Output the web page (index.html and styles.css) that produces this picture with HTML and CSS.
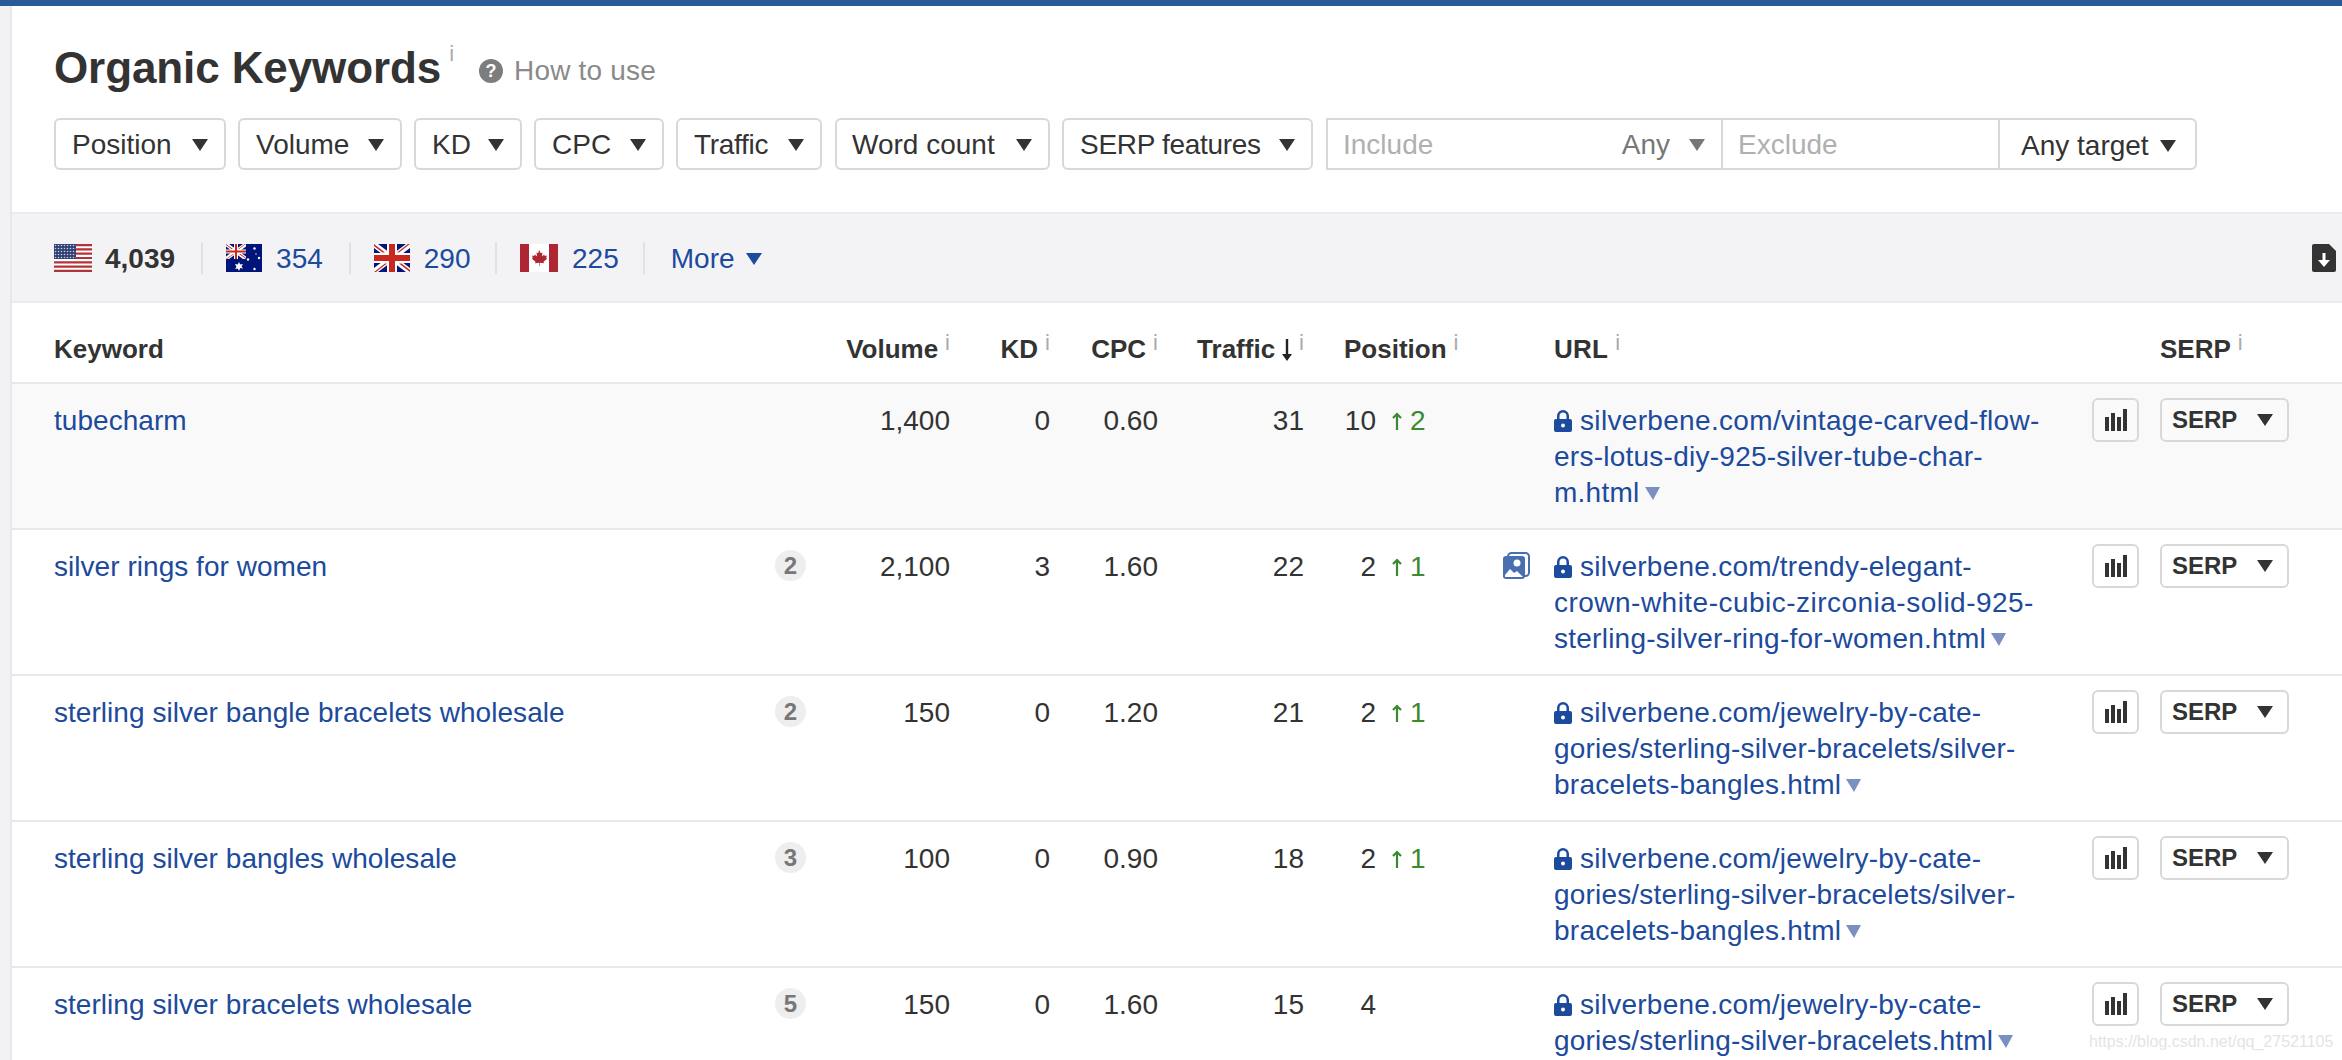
FILE: index.html
```html
<!DOCTYPE html>
<html lang="en">
<head>
<meta charset="utf-8">
<title>Organic Keywords</title>
<link rel="stylesheet" href="styles.css">
</head>
<body>
<svg class="defs" width="0" height="0" aria-hidden="true">
  <defs>
    <symbol id="lock" viewBox="0 0 18 22"><path fill="#1c4a9c" fill-rule="evenodd" d="M3 9V6a6 6 0 0 1 12 0v3h1a2 2 0 0 1 2 2v9a2 2 0 0 1-2 2H2a2 2 0 0 1-2-2v-9a2 2 0 0 1 2-2h1zm2.500 0h7V6a3.500 3.500 0 0 0-7 0v3zM9 13.500a2 2 0 1 0 0 4 2 2 0 0 0 0-4z"/></symbol>
    <symbol id="chart" viewBox="0 0 22 22"><path fill="#333" d="M0 8h4v14H0zM6 4h4v18H6zM12 8h4v14h-4zM18 0h4v22h-4z"/></symbol>
    <symbol id="up" viewBox="0 0 10 18"><path fill="none" stroke="#3a8a2f" stroke-width="2.200" d="M5 18V2M1 6l4-4 4 4"/></symbol>
  </defs>
</svg>
<div class="topbar"></div>
<div class="layout">
  <div class="strip"></div>
  <main class="main">
    <header class="head">
      <div class="title-row">
        <h1 class="title">Organic Keywords<span class="info info-title">i</span></h1>
        <a class="how">
          <svg class="how-icon" viewBox="0 0 24 24"><circle cx="12" cy="12" r="12" fill="#7d7d7d"/><text x="12" y="18" text-anchor="middle" class="how-q">?</text></svg>
          How to use
        </a>
      </div>
      <div class="filters">
        <button class="btn w-position">Position<i class="tri"></i></button>
        <button class="btn w-volume">Volume<i class="tri"></i></button>
        <button class="btn w-kd">KD<i class="tri"></i></button>
        <button class="btn w-cpc">CPC<i class="tri"></i></button>
        <button class="btn w-traffic">Traffic<i class="tri"></i></button>
        <button class="btn w-word">Word count<i class="tri"></i></button>
        <button class="btn w-features">SERP features<i class="tri"></i></button>
        <div class="search">
          <div class="s-include"><span class="ph">Include</span><span class="any">Any<i class="tri tri-gray"></i></span></div>
          <div class="s-exclude"><span class="ph">Exclude</span></div>
          <div class="s-target">Any target<i class="tri tri-close"></i></div>
        </div>
      </div>
    </header>

    <section class="band">
      <span class="country current">
        <svg class="flag flag-w" viewBox="0 0 38 28">
          <defs><pattern id="dots" width="3" height="3" patternUnits="userSpaceOnUse"><rect width="3" height="3" fill="#2f3f73"/><circle cx="1.500" cy="1.500" r=".8" fill="#c9cde0"/></pattern></defs>
          <rect width="38" height="28" fill="#fff"/>
          <path fill="#b0353a" d="M0 0h38v2.200H0zM0 4.300h38v2.200H0zM0 8.600h38v2.200H0zM0 12.900h38v2.200H0zM0 17.200h38v2.200H0zM0 21.500h38v2.200H0zM0 25.800h38V28H0z"/>
          <rect width="22" height="15" fill="url(#dots)"/>
        </svg>4,039</span>
      <span class="sep"></span>
      <a class="country">
        <svg class="flag" viewBox="0 0 36 28">
          <rect width="36" height="28" fill="#00157a"/>
          <path fill="#fff" d="M0 0h3l17 12.500V15h-3L0 2.500zM20 0v2.500L3 15H0v-2.500L17 0z"/>
          <path fill="#fff" d="M8 0h4v15H8zM0 5.500h20v4H0z"/>
          <path fill="#c8281e" d="M9 0h2v15H9zM0 6.500h20v2H0z"/>
          <path fill="#c8281e" d="M0 0l7 5H5.500L0 1zM20 15l-7-5h1.500l5.500 4zM20 0l-7 5h-1l7-5zM0 15l7-5h1l-7 5z"/>
          <path fill="#fff" d="M13 18l1.200 2.500 2.800-.6-1.500 2.300 1.500 2.300-2.800-.5L13 27l-1.200-2.500-2.800.5 1.500-2.300L9 19.900l2.800.6z"/>
          <circle cx="28.500" cy="4.500" r="1.200" fill="#fff"/><circle cx="22" cy="15.500" r="1.200" fill="#fff"/><circle cx="33" cy="14" r="1.200" fill="#fff"/><circle cx="28.500" cy="25" r="1.200" fill="#fff"/><circle cx="30" cy="10" r=".7" fill="#fff"/>
        </svg>354</a>
      <span class="sep"></span>
      <a class="country">
        <svg class="flag" viewBox="0 0 36 28">
          <rect width="36" height="28" fill="#00157a"/>
          <path fill="#fff" d="M0 0h4l32 24v4h-4L0 4zM36 0v4L4 28H0v-4L32 0z"/>
          <path fill="#fff" d="M13 0h10v9h13v10H23v9H13v-9H0V9h13z"/>
          <path fill="#c8281e" d="M15 0h6v11h15v6H21v11h-6V17H0v-6h15z"/>
          <path fill="#c8281e" d="M0 0l11 8.500H8.500L0 2zM36 28L25 19.500h2.500L36 26zM36 0L25 8.500h-2L34 0zM0 28l11-8.500h2L2 28z"/>
        </svg>290</a>
      <span class="sep sep-ca"></span>
      <a class="country">
        <svg class="flag flag-w" viewBox="0 0 38 28">
          <rect width="38" height="28" fill="#fff"/>
          <path fill="#ae2633" d="M0 0h9v28H0zM29 0h9v28h-9z"/>
          <path fill="#ae2633" d="M19 6l1.800 3.200 1.700-.8-.6 4 2.300-2 .6 1.500 2.200-.4-.8 2.600.9.600-3.600 3.100.4 1.400-4.100-.5V22h-.6v-3.300l-4.100.5.400-1.400-3.600-3.100.9-.6-.8-2.600 2.200.4.600-1.500 2.300 2-.6-4 1.700.8z"/>
        </svg>225</a>
      <span class="sep sep-last"></span>
      <a class="more">More<i class="tri tri-blue"></i></a>
      <svg class="export" viewBox="0 0 24 28"><path fill="#333" d="M3 0h14l7 7v19a2 2 0 0 1-2 2H2a2 2 0 0 1-2-2V2a2 2 0 0 1 2-2z"/><path fill="#fff" d="M10.500 9h3v7H18l-6 7-6-7h4.500z"/></svg>
    </section>

    <section class="table">
      <div class="row row-head">
        <div class="th th-kw">Keyword</div>
        <div class="th num c-vol">Volume<span class="info">i</span></div>
        <div class="th num c-kd">KD<span class="info">i</span></div>
        <div class="th num c-cpc">CPC<span class="info">i</span></div>
        <div class="th num c-tr">Traffic<svg class="sort" viewBox="0 0 10 22"><path fill="#222" d="M3.800 0h2.400v15H10l-5 7-5-7h3.800z"/></svg><span class="info">i</span></div>
        <div class="th c-pos">Position<span class="info">i</span></div>
        <div class="th c-url">URL<span class="info">i</span></div>
        <div class="th c-serp-head">SERP<span class="info">i</span></div>
      </div>

      <div class="row row-hover">
        <a class="td kw">tubecharm</a>
        <div class="td num c-vol">1,400</div>
        <div class="td num c-kd">0</div>
        <div class="td num c-cpc">0.60</div>
        <div class="td num c-tr">31</div>
        <div class="td c-pos"><span class="pos">10</span><svg class="up"><use href="#up"/></svg><span class="delta">2</span></div>
        <a class="td c-url"><svg class="lock"><use href="#lock"/></svg><span class="loose">silverbene.com/vintage-carved-flow-</span><br>ers-lotus-diy-925-silver-tube-char-<br>m.html<i class="tri tri-url"></i></a>
        <button class="chart"><svg class="chart-icon"><use href="#chart"/></svg></button>
        <button class="serp">SERP<i class="tri"></i></button>
      </div>

      <div class="row">
        <a class="td kw">silver rings for women</a>
        <span class="badge">2</span>
        <div class="td num c-vol">2,100</div>
        <div class="td num c-kd">3</div>
        <div class="td num c-cpc">1.60</div>
        <div class="td num c-tr">22</div>
        <div class="td c-pos"><span class="pos">2</span><svg class="up"><use href="#up"/></svg><span class="delta">1</span></div>
        <svg class="img-icon" viewBox="0 0 28 28"><rect x="6" y="1" width="21" height="23" rx="3.500" fill="none" stroke="#4a6fb0" stroke-width="2"/><rect x="1" y="4" width="22" height="23" rx="3" fill="#4a6fb0"/><circle cx="15" cy="11" r="3.500" fill="#fff"/><path fill="#fff" d="M3 25v-2l5-6 4 4 3-2 6 6z"/></svg>
        <a class="td c-url"><svg class="lock"><use href="#lock"/></svg>silverbene.com/trendy-elegant-<br><span class="wide">crown-white-cubic-zirconia-solid-925-</span><br>sterling-silver-ring-for-women.html<i class="tri tri-url"></i></a>
        <button class="chart"><svg class="chart-icon"><use href="#chart"/></svg></button>
        <button class="serp">SERP<i class="tri"></i></button>
      </div>

      <div class="row">
        <a class="td kw">sterling silver bangle bracelets wholesale</a>
        <span class="badge">2</span>
        <div class="td num c-vol">150</div>
        <div class="td num c-kd">0</div>
        <div class="td num c-cpc">1.20</div>
        <div class="td num c-tr">21</div>
        <div class="td c-pos"><span class="pos">2</span><svg class="up"><use href="#up"/></svg><span class="delta">1</span></div>
        <a class="td c-url"><svg class="lock"><use href="#lock"/></svg>silverbene.com/jewelry-by-cate-<br><span class="tight">gories/sterling-silver-bracelets/silver-</span><br>bracelets-bangles.html<i class="tri tri-url"></i></a>
        <button class="chart"><svg class="chart-icon"><use href="#chart"/></svg></button>
        <button class="serp">SERP<i class="tri"></i></button>
      </div>

      <div class="row">
        <a class="td kw">sterling silver bangles wholesale</a>
        <span class="badge">3</span>
        <div class="td num c-vol">100</div>
        <div class="td num c-kd">0</div>
        <div class="td num c-cpc">0.90</div>
        <div class="td num c-tr">18</div>
        <div class="td c-pos"><span class="pos">2</span><svg class="up"><use href="#up"/></svg><span class="delta">1</span></div>
        <a class="td c-url"><svg class="lock"><use href="#lock"/></svg>silverbene.com/jewelry-by-cate-<br><span class="tight">gories/sterling-silver-bracelets/silver-</span><br>bracelets-bangles.html<i class="tri tri-url"></i></a>
        <button class="chart"><svg class="chart-icon"><use href="#chart"/></svg></button>
        <button class="serp">SERP<i class="tri"></i></button>
      </div>

      <div class="row">
        <a class="td kw">sterling silver bracelets wholesale</a>
        <span class="badge">5</span>
        <div class="td num c-vol">150</div>
        <div class="td num c-kd">0</div>
        <div class="td num c-cpc">1.60</div>
        <div class="td num c-tr">15</div>
        <div class="td c-pos"><span class="pos">4</span></div>
        <a class="td c-url"><svg class="lock"><use href="#lock"/></svg>silverbene.com/jewelry-by-cate-<br><span class="tight">gories/sterling-silver-bracelets.html</span><i class="tri tri-url"></i></a>
        <button class="chart"><svg class="chart-icon"><use href="#chart"/></svg></button>
        <button class="serp">SERP<i class="tri"></i></button>
      </div>
    </section>
  </main>
</div>
<div class="watermark">https://blog.csdn.net/qq_27521105</div>
</body>
</html>
```

FILE: styles.css
```css
* { box-sizing: border-box; }
html, body { margin: 0; height: 1060px; overflow: hidden; background: #fff; }
body { font-family: "Liberation Sans", Arial, sans-serif; font-size: 28px; color: #333; position: relative; }
a { color: #1c4a9c; text-decoration: none; }
.defs { position: absolute; }

.topbar { height: 6px; background: #265a99; }
.layout { display: flex; height: 1054px; overflow: hidden; }
.strip { flex: 0 0 12px; background: #f2f2f5; border-right: 2px solid #e8e8eb; }
.main { flex: 1; min-width: 0; }

.head { height: 206px; padding: 36px 0 0 42px; }
.title-row { display: flex; align-items: baseline; height: 52px; margin-bottom: 24px; }
.title { margin: 0; font-size: 44px; line-height: 52px; font-weight: 700; color: #333; white-space: nowrap; letter-spacing: -.1px; }
.info { display: inline-block; font-size: 22px; font-weight: 400; line-height: 0; color: #ababab; margin-left: 7px; vertical-align: 8px; }
.info-title { margin-left: 8px; vertical-align: 22px; }
.how { display: flex; align-items: center; margin-left: 25px; color: #8a8a8a; font-size: 28px; line-height: 32px; letter-spacing: .2px; }
.how-icon { width: 24px; height: 24px; margin-right: 11px; }
.how-q { fill: #fff; font-size: 18px; font-weight: 700; font-family: "Liberation Sans", Arial, sans-serif; }

.filters { display: flex; gap: 12px; height: 52px; }
.btn { display: flex; align-items: center; justify-content: space-between; height: 52px; padding: 2px 16px 0; border: 2px solid #d8d8d8; border-radius: 6px; background: #fff; color: #333; font: 28px "Liberation Sans", Arial, sans-serif; white-space: nowrap; }
.w-position { width: 172px; }
.w-volume { width: 164px; }
.w-kd { width: 108px; }
.w-cpc { width: 130px; }
.w-traffic { width: 146px; letter-spacing: -.3px; }
.w-word { width: 215px; margin-left: 1px; padding-left: 15px; }
.w-features { width: 251px; letter-spacing: -.3px; }
.tri { display: inline-block; width: 0; height: 0; border-left: 8px solid transparent; border-right: 8px solid transparent; border-top: 12px solid #333; }
.tri-gray { border-top-color: #777; margin-left: 19px; }
.tri-close { margin-left: 11px; }
.tri-blue { border-top-color: #1c4a9c; margin-left: 11px; }
.tri-url { border-left-width: 8px; border-right-width: 7px; border-top: 13px solid #7b8fc0; margin-left: 5px; vertical-align: 2px; }

.search { display: flex; margin-left: 1px; width: 871px; height: 52px; border: 2px solid #d8d8d8; border-radius: 0 6px 6px 0; }
.s-include { display: flex; align-items: center; justify-content: space-between; width: 395px; padding: 2px 16px 0 15px; border-right: 2px solid #d8d8d8; }
.s-exclude { display: flex; align-items: center; width: 277px; padding: 2px 15px 0; border-right: 2px solid #d8d8d8; }
.s-target { display: flex; align-items: center; flex: 1; padding: 3px 0 0 21px; white-space: nowrap; }
.ph { color: #b0b0b0; }
.any { display: flex; align-items: center; color: #777; }

.band { display: flex; align-items: center; height: 91px; padding-left: 42px; padding-right: 6px; background: #f3f3f6; border-top: 2px solid #ececef; border-bottom: 2px solid #ececef; }
.country { display: flex; align-items: center; gap: 14px; padding-top: 2px; }
.country.current { font-weight: 700; gap: 13px; }
.flag { width: 36px; height: 28px; display: block; margin-bottom: 2px; }
.flag-w { width: 38px; }
.sep { flex: none; width: 2px; height: 32px; background: #e2e2e5; margin: 0 23px 0 26px; }
.sep-ca { margin-left: 24.500px; }
.sep-last { margin-left: 24px; }
.more { display: flex; align-items: center; padding-top: 2px; margin-left: 3px; }
.export { width: 24px; height: 28px; margin-left: auto; }

.row { display: grid; grid-template-columns: 721px 30px 145px 100px 108px 146px 198px 28px 24px 538px 47px 21px 129px; height: 146px; padding: 14px 0 0 42px; border-bottom: 2px solid #e8e8e8; grid-template-rows: auto; align-items: start; }
.row-head { height: 81px; padding-top: 28px; }
.row-hover { background: #f9f9f9; }
.td { grid-row: 1; line-height: 36px; padding-top: 5px; }
.th { grid-row: 1; font-size: 26px; font-weight: 700; line-height: 36px; white-space: nowrap; color: #333; }
.kw { grid-column: 1; letter-spacing: .04px; }
.th-kw { grid-column: 1; }
.num { text-align: right; }
.c-vol { grid-column: 3; }
.c-kd { grid-column: 4; }
.c-cpc { grid-column: 5; }
.c-tr { grid-column: 6; }
.c-pos { grid-column: 7; padding-left: 40px; display: flex; align-items: center; }
.th.c-pos { display: block; }
.c-url { grid-column: 10; white-space: nowrap; letter-spacing: .25px; }
.wide { letter-spacing: .48px; }
.loose { letter-spacing: .33px; }
.tight { letter-spacing: .18px; }
.c-serp-head { grid-column: 11 / span 3; padding-left: 68px; }
.sort { width: 10px; height: 22px; margin-left: 7px; vertical-align: -3px; }
.pos { display: inline-block; width: 32px; text-align: right; }
.up { width: 10px; height: 18px; margin-left: 16px; }
.delta { color: #3a8a2f; margin-left: 8px; }
.lock { width: 18px; height: 22px; margin-right: 8px; vertical-align: -2px; }
.badge { grid-column: 2; grid-row: 1; width: 31px; height: 31px; margin-top: 6px; border-radius: 50%; background: #eeeeee; color: #777; font-size: 24px; font-weight: 700; line-height: 31px; text-align: center; }
.img-icon { grid-column: 8; grid-row: 1; width: 28px; height: 28px; margin-top: 8px; }
.chart, .serp { grid-row: 1; height: 44px; background: #fff; border: 2px solid #d8d8d8; border-radius: 6px; padding: 0; }
.row-hover .chart, .row-hover .serp { background: #fafafa; }
.chart { grid-column: 11; width: 47px; display: flex; align-items: center; justify-content: center; }
.chart-icon { width: 22px; height: 22px; }
.serp { grid-column: 13; width: 129px; display: flex; align-items: center; gap: 20px; padding-left: 10px; color: #333; font: 700 24px "Liberation Sans", Arial, sans-serif; }

.watermark { position: absolute; left: 2089px; top: 1031px; font-size: 16px; line-height: 22px; color: #e4e4e4; white-space: nowrap; }
```
